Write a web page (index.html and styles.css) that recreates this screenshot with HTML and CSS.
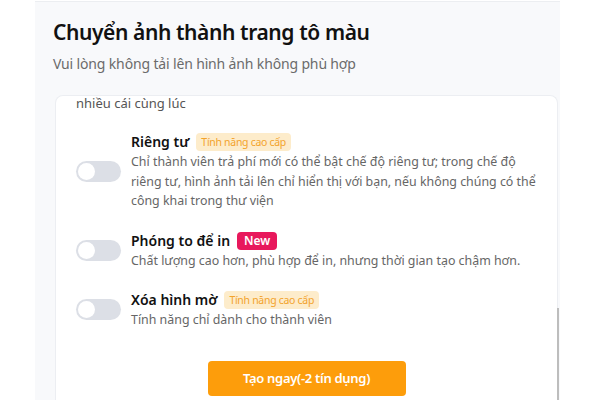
FILE: index.html
```html
<!DOCTYPE html>
<html>
<head>
<meta charset="UTF-8"/>
<title>Chuyển ảnh thành trang tô màu</title>
<link rel="stylesheet" href="styles.css">
</head>
<body>
<section class="panel">
<h1>Chuyển ảnh thành trang tô màu</h1>
<p class="subtitle">Vui lòng không tải lên hình ảnh không phù hợp</p>
<div class="card">
<p class="tail">nhiều cái cùng lúc</p>
<div class="option">
<span class="switch"></span>
<div class="option-text">
<h3>Riêng tư <span class="badge premium">Tính năng cao cấp</span></h3>
<p>Chỉ thành viên trả phí mới có thể bật chế độ riêng tư; trong chế độ riêng tư, hình ảnh tải lên chỉ hiển thị với bạn, nếu không chúng có thể công khai trong thư viện</p>
</div>
</div>
<div class="option">
<span class="switch"></span>
<div class="option-text">
<h3>Phóng to để in <span class="badge new">New</span></h3>
<p>Chất lượng cao hơn, phù hợp để in, nhưng thời gian tạo chậm hơn.</p>
</div>
</div>
<div class="option">
<span class="switch"></span>
<div class="option-text">
<h3>Xóa hình mờ <span class="badge premium">Tính năng cao cấp</span></h3>
<p>Tính năng chỉ dành cho thành viên</p>
</div>
</div>
<div class="actions">
<button class="create">Tạo ngay(-2 tín dụng)</button>
</div>
</div>
</section>
</body>
</html>
```
FILE: styles.css
```css
body {
    margin: 0;
    background: #fff;
    font-family: "Noto Sans", "Open Sans", sans-serif;
    height: 400px;
    overflow: hidden;
}
.panel {
    margin: 1px 0 0 35px;
    width: 525px;
    height: 399px;
    background: #f8f9fb;
    border-top: 1px solid #eceef1;
    padding: 0 0 0 20px;
    box-sizing: border-box;
}
h1 {
    margin: 0 0 0 -2px;
    padding-top: 16px;
    font-size: 21px;
    font-weight: 600;
    line-height: 28px;
    letter-spacing: -0.4px;
    color: #111;
}
.subtitle {
    margin: 8px 0 0 -2px;
    font-size: 14px;
    line-height: 20px;
    letter-spacing: -0.15px;
    color: #6b6b6b;
}
.card {
    position: relative;
    margin-top: 21px;
    margin-right: 2px;
    height: 310px;
    background: #fff;
    border: 1px solid #eceef2;
    border-bottom: none;
    border-radius: 8px 8px 0 0;
    padding: 0 20px;
}
.card:after {
    content: "";
    position: absolute;
    right: -2px;
    top: 212px;
    width: 2px;
    height: 100px;
    background: #bdbdbd;
}
.card p {
    margin: 0;
}
.tail {
    font-size: 13px;
    line-height: 14px;
    color: #555;
}
.option {
    display: flex;
    align-items: center;
    gap: 10px;
    margin-top: 20px;
}
.card .tail + .option {
    margin-top: 22px;
}
.switch {
    position: relative;
    flex: none;
    width: 45px;
    height: 21px;
    border-radius: 11px;
    background: #dcdfe6;
}
.switch:before {
    content: "";
    position: absolute;
    left: 2px;
    top: 2px;
    width: 17px;
    height: 17px;
    border-radius: 50%;
    background: #fff;
}
.option-text h3 {
    margin: 0;
    font-size: 14px;
    font-weight: 600;
    line-height: 20px;
    color: #111;
    display: flex;
    align-items: center;
    gap: 7px;
}
.option-text p {
    font-size: 12.4px;
    line-height: 19.5px;
    color: #666;
    max-width: 410px;
}
.badge {
    font-size: 10.5px;
    font-weight: 400;
    line-height: 18px;
    letter-spacing: -0.3px;
    padding: 0 5px;
    border-radius: 4px;
}
.premium {
    background: #fdeccb;
    color: #f3a32b;
}
.new {
    background: #e8185c;
    color: #fff;
    font-size: 12px;
    font-weight: 600;
    letter-spacing: 0;
    padding: 0 7px;
}
.actions {
    display: flex;
    justify-content: center;
    margin-top: 31px;
}
.create {
    width: 198px;
    height: 35px;
    border: none;
    border-radius: 4px;
    background: #fd9d0b;
    color: #fff;
    font-family: inherit;
    font-size: 13px;
    font-weight: 600;
    letter-spacing: -0.3px;
}
```
